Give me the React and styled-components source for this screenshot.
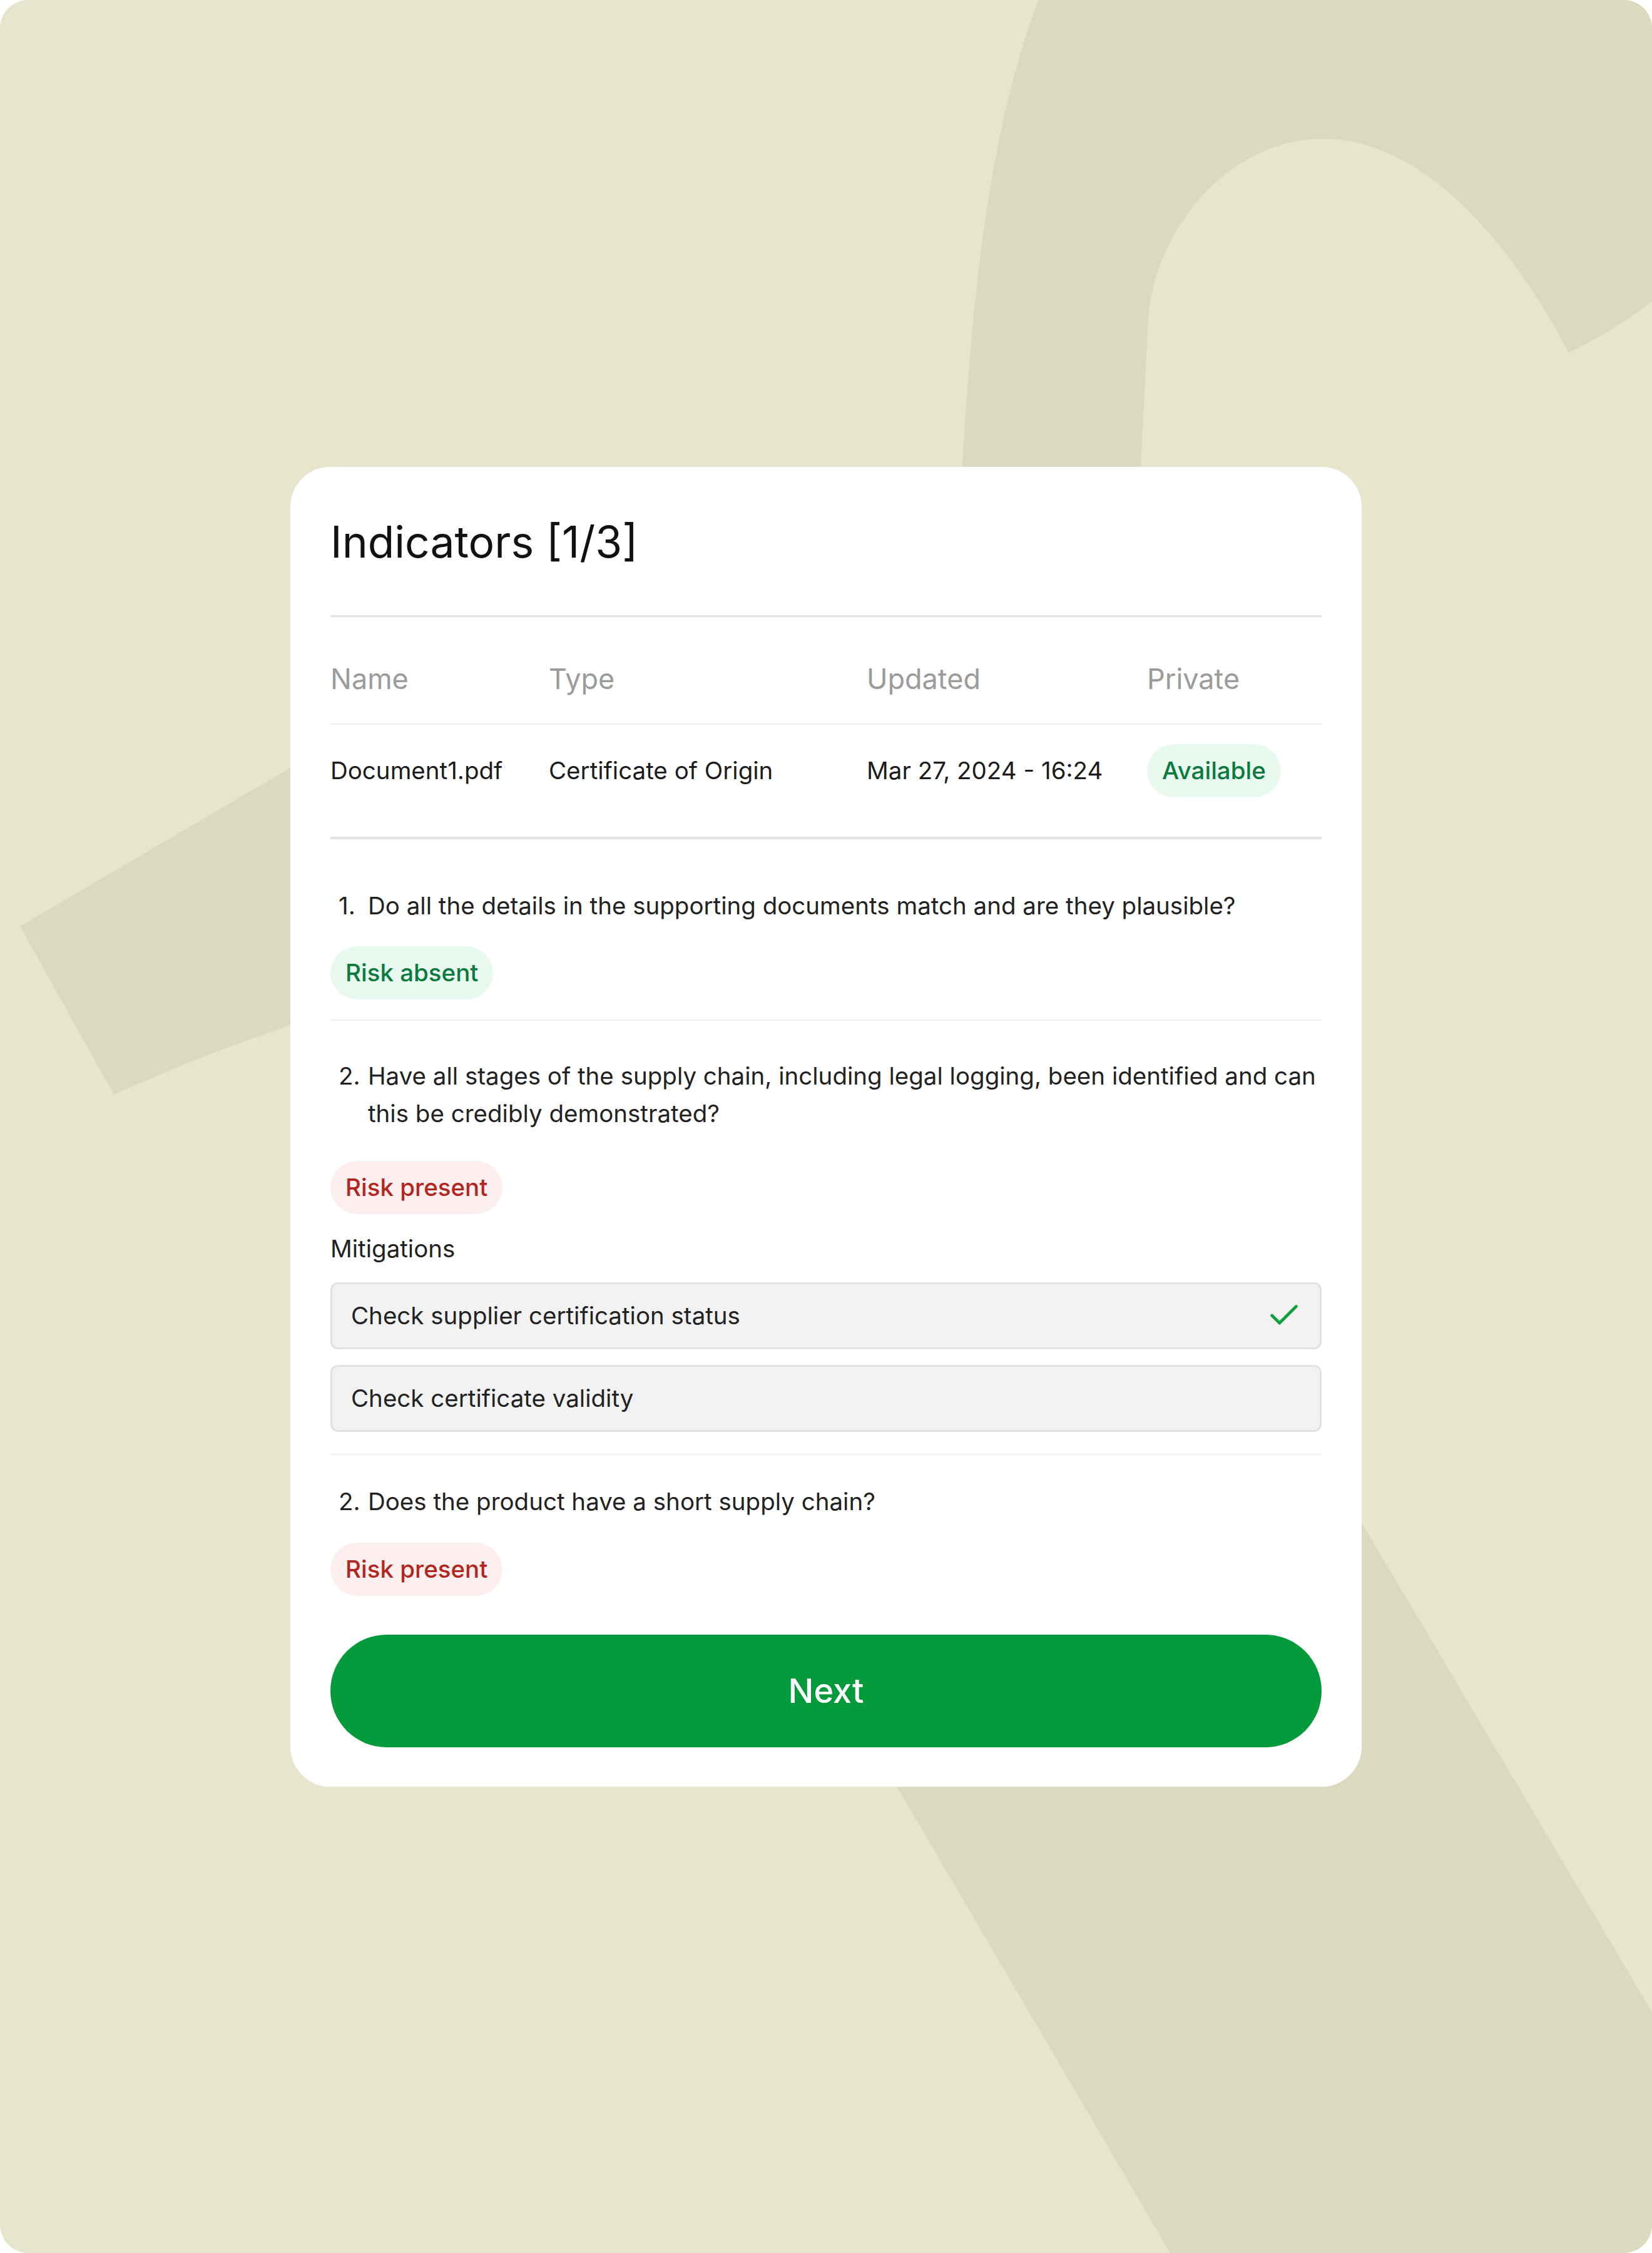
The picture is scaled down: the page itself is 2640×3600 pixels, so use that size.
import styled, { createGlobalStyle } from "styled-components";
import { Check } from "lucide-react";

const GlobalStyle = createGlobalStyle`
  * { box-sizing: border-box; }
  body {
    margin: 0;
    background: #ffffff;
    font-family: "Inter", "Noto Sans", sans-serif;
  }
`;

const questions = [
  {
    num: "1.",
    text: "Do all the details in the supporting documents match and are they plausible?",
    risk: false,
    pad: "76px 0 32px",
    gap: "35px",
  },
  {
    num: "2.",
    text: "Have all stages of the supply chain, including legal logging, been identified and can this be credibly demonstrated?",
    risk: true,
    pad: "58px 0 35px",
    gap: "46px",
    mitigations: [
      { label: "Check supplier certification status", done: true },
      { label: "Check certificate validity", done: false },
    ],
  },
  {
    num: "2.",
    text: "Does the product have a short supply chain?",
    risk: true,
    pad: "44px 0 0",
    gap: "36px",
    last: true,
  },
];

const App = () => {
  return (
    <>
      <GlobalStyle />
      <Page>
        <Backdrop width="2640" height="3600" viewBox="0 0 2640 3600">
          <path d="M1659 0 L2640 0 L2640 482 Q2580 528 2507 564 C2400 360 2260 222 2115 222 C1960 222 1845 370 1835 510 L1815 900 L1530 900 L1538 744 C1555 440 1585 200 1659 0 Z" />
          <path d="M32 1480 L462 1228 L700 1088 L700 1546 L462 1639 Q330 1683 182 1749 Z" />
          <path d="M932 2000 L1919 2000 L2640 3215 L2640 3600 L1870 3600 Z" />
        </Backdrop>

        <Card>
          <Title>Indicators [1/3]</Title>

          <Table>
            <HeadRow>
              <span>Name</span>
              <span>Type</span>
              <span>Updated</span>
              <span>Private</span>
            </HeadRow>
            <DataRow>
              <span>Document1.pdf</span>
              <span>Certificate of Origin</span>
              <span>Mar 27, 2024 - 16:24</span>
              <span>
                <Badge $tone="green">Available</Badge>
              </span>
            </DataRow>
          </Table>

          {questions.map((q, i) => (
            <Question key={i} $pad={q.pad} $last={q.last} $gap={q.gap}>
              <QuestionText>
                <Num>{q.num}</Num>
                <span>{q.text}</span>
              </QuestionText>
              <div>
                <Badge $tone={q.risk ? "red" : "green"}>
                  {q.risk ? "Risk present" : "Risk absent"}
                </Badge>
              </div>
              {q.mitigations && (
                <Mitigations>
                  <Label>Mitigations</Label>
                  {q.mitigations.map((m) => (
                    <MitigationBox key={m.label}>
                      {m.label}
                      {m.done && <Check size={58} strokeWidth={2} color="#10a040" />}
                    </MitigationBox>
                  ))}
                </Mitigations>
              )}
            </Question>
          ))}

          <NextButton>Next</NextButton>
        </Card>
      </Page>
    </>
  );
};

const Page = styled.div`
  position: relative;
  width: 2640px;
  height: 3600px;
  border-radius: 45px;
  overflow: hidden;
  background: #e6e6ce;
  display: flex;
  align-items: center;
  justify-content: center;
`;

const Backdrop = styled.svg`
  position: absolute;
  inset: 0;
  fill: #dbdac0;
`;

const Card = styled.div`
  position: relative;
  width: 1712px;
  background: #ffffff;
  border-radius: 64px;
  padding: 78px 64px 63px;
  display: flex;
  flex-direction: column;
`;

const Title = styled.h1`
  margin: 0 0 75px;
  font-size: 69.5px;
  line-height: 84px;
  font-weight: 400;
  color: #111111;
`;

const Table = styled.div`
  border-top: 3px solid #e4e4e4;
  border-bottom: 4px solid #e4e4e4;
`;

const Row = styled.div`
  display: grid;
  grid-template-columns: 349px 508px 448px 1fr;
  align-items: center;
`;

const HeadRow = styled(Row)`
  padding: 66px 0 38px;
  font-size: 45px;
  line-height: 66px;
  color: #9b9b9b;
  border-bottom: 2px solid #efefef;
`;

const DataRow = styled(Row)`
  padding: 31px 0 63px;
  font-size: 38.5px;
  line-height: 60px;
  color: #1c1c1c;
`;

const Badge = styled.span`
  display: inline-flex;
  align-items: center;
  height: 85px;
  padding: 0 24px;
  border-radius: 999px;
  font-size: 38.5px;
  font-weight: 500;
  color: ${(p) => (p.$tone === "red" ? "#b3261e" : "#0b7a3f")};
  background: ${(p) => (p.$tone === "red" ? "#fdefef" : "#e9f9ef")};
`;

const Question = styled.section`
  display: flex;
  flex-direction: column;
  gap: ${(p) => p.$gap};
  padding: ${(p) => p.$pad};
  border-bottom: ${(p) => (p.$last ? "none" : "2px solid #f0f0f0")};
`;

const QuestionText = styled.p`
  margin: 0;
  display: flex;
  font-size: 38.5px;
  line-height: 60px;
  color: #222222;
`;

const Num = styled.span`
  flex: 0 0 60px;
  padding-left: 13px;
`;

const Mitigations = styled.div`
  display: flex;
  flex-direction: column;
  gap: 25px;
  margin-top: -21px;
`;

const Label = styled.div`
  font-size: 38.5px;
  line-height: 60px;
  color: #222222;
  margin-bottom: -1px;
`;

const MitigationBox = styled.div`
  display: flex;
  align-items: center;
  justify-content: space-between;
  height: 107px;
  padding: 0 28px 0 30px;
  background: #f2f2f2;
  border: 3px solid #e2e2e2;
  border-radius: 12px;
  font-size: 38.5px;
  color: #222222;
`;

const NextButton = styled.button`
  margin-top: 62px;
  height: 180px;
  width: 100%;
  border: 0;
  border-radius: 90px;
  background: #029a3b;
  color: #ffffff;
  font-family: inherit;
  font-size: 54px;
  font-weight: 500;
  cursor: pointer;
`;

export default App;
